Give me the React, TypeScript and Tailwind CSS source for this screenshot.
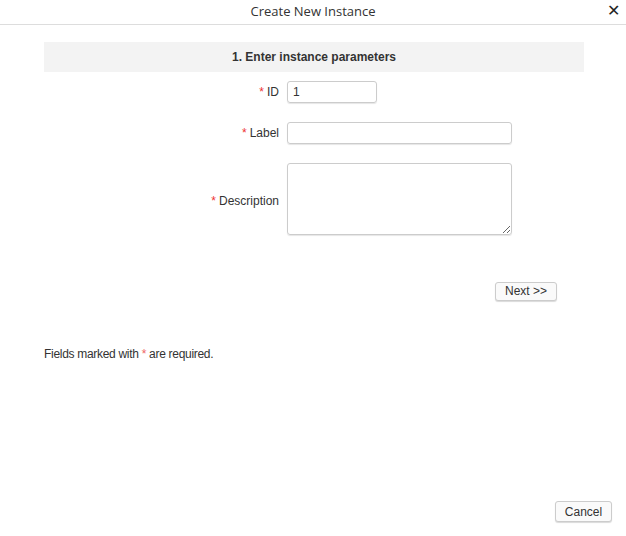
export default function App() {
  const font = { fontFamily: '"Liberation Sans", Arial, sans-serif' }
  const Req = () => <span className="text-[#e33] mr-[3px]">*</span>
  return (
    <div className="w-[626px] h-[536px] bg-white relative text-[#333]" style={font}>
      <div className="h-[25px] border-b border-[#ddd] flex items-center justify-center relative">
        <span className="text-[13px] text-[#333]" style={{ fontFamily: '"Open Sans", sans-serif' }}>Create New Instance</span>
        <span className="absolute right-[6px] top-[1px] text-[16px] leading-[20px] text-[#222]">✕</span>
      </div>
      <div className="mx-[44px] mt-[17px] w-[540px] h-[30px] bg-[#f3f3f3] flex items-center justify-center text-[12px] font-bold">
        1. Enter instance parameters
      </div>
      <div className="flex items-center mt-[9px] h-[22px]">
        <label className="w-[279px] text-right text-[12px]"><Req />ID</label>
        <input defaultValue="1" className="ml-[8px] w-[90px] h-[22px] border border-[#ccc] rounded-[3px] px-[5px] text-[12px] shadow-[0_1px_1px_rgba(0,0,0,0.1)]" />
      </div>
      <div className="flex items-center mt-[19px] h-[22px]">
        <label className="w-[279px] text-right text-[12px]"><Req />Label</label>
        <input className="ml-[8px] w-[225px] h-[22px] border border-[#ccc] rounded-[3px] px-[5px] text-[12px] shadow-[0_1px_1px_rgba(0,0,0,0.1)]" />
      </div>
      <div className="flex items-start mt-[19px]">
        <label className="w-[279px] text-right text-[12px] mt-[29px]"><Req />Description</label>
        <textarea className="ml-[8px] w-[225px] h-[72px] border border-[#ccc] rounded-[3px] px-[5px] text-[12px] shadow-[0_1px_1px_rgba(0,0,0,0.1)]" />
      </div>
      <div className="flex mt-[47px] pl-[495px]">
        <button className="w-[62px] h-[19px] border border-[#ccc] rounded-[3px] bg-[#fafafa] text-[12px] leading-[17px] shadow-[0_1px_1px_rgba(0,0,0,0.15)]">Next &gt;&gt;</button>
      </div>
      <p className="ml-[44px] mt-[44px] text-[12px] tracking-[-0.3px]">Fields marked with <span className="text-[#e66]">*</span> are required.</p>
      <button className="absolute left-[555px] top-[501px] w-[57px] h-[21px] border border-[#ccc] rounded-[3px] bg-[#fafafa] text-[12px] shadow-[0_1px_1px_rgba(0,0,0,0.15)]">Cancel</button>
    </div>
  )
}
